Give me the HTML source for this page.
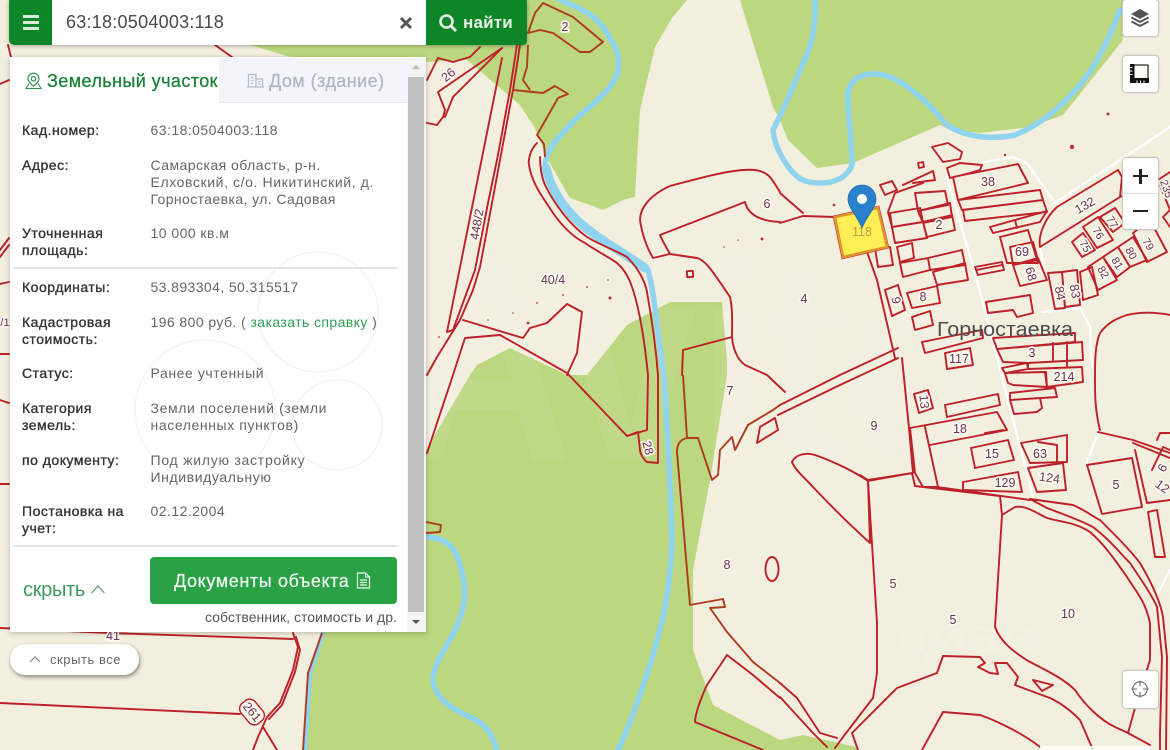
<!DOCTYPE html>
<html lang="ru"><head><meta charset="utf-8"><title>Карта</title>
<style>
html,body{margin:0;padding:0}
body{width:1170px;height:750px;position:relative;overflow:hidden;background:#f3efdf;font-family:"Liberation Sans","DejaVu Sans",sans-serif}
#map{position:absolute;left:0;top:0;filter:blur(.3px)}
.r{fill:none;stroke:#bd2028;stroke-width:1.9;stroke-linejoin:round;stroke-linecap:round}
.b{fill:none;stroke:#ae3a20;stroke-width:1.9;stroke-linejoin:round}
.w{fill:none;stroke:#fff;stroke-width:2.4;stroke-linejoin:round;stroke-linecap:round}
.riv{fill:none;stroke:#8fd3ef;stroke-linejoin:round;stroke-linecap:round}
.l{font:12.5px "Liberation Sans",sans-serif;fill:#6d3556;text-anchor:middle;paint-order:stroke;stroke:#fbf8ee;stroke-width:3.5px;stroke-linejoin:round}
.t{position:absolute;white-space:nowrap;line-height:17px;font-size:14px}
.k{color:#333;letter-spacing:.5px;-webkit-text-stroke:.35px #333}
.v{color:#666;letter-spacing:.46px}
.ctl{position:absolute;left:1122px;width:35px;background:#fff;border:1px solid #c9c9c3;border-radius:4px;box-shadow:0 0 2px rgba(0,0,0,.15)}
</style></head><body>
<svg id="map" width="1170" height="750" viewBox="0 0 1170 750" xmlns="http://www.w3.org/2000/svg">
<rect width="1170" height="750" fill="#f3efdf"/>
<!-- green -->
<path fill="#bbd77f" d="M250 45L527 0H687L672 18L655 47L640 110L637 160L635 197L623 200L603 210L590 205L570 198L548 160L535 128L520 105L467 60L430 62L300 60Z"/>
<path fill="#bbd77f" d="M740 0L750 33L773 107L780 120L788 140L817 168L853 163L940 125L950 130L980 133L1030 127L1063 115L1123 40V0Z"/>
<path fill="#bbd77f" d="M426 450L470 375L477 365L510 348L567 375L587 375L627 325L670 302L722 302L727 360L727 375L710 480L693 570L693 650L713 705L780 740L803 735L857 747V750H303L308 673L323 632H426Z"/>
<!-- water -->
<path class="riv" stroke-width="5.5" d="M560 0C580 8 593 14 603 27C615 45 622 55 617 75C608 95 590 105 573 122C558 138 547 148 545 165"/>
<path class="riv" stroke-width="9" d="M546 168C550 185 558 200 572 215C590 235 620 250 645 268"/>
<path class="riv" stroke-width="5.5" d="M648 270C655 295 658 340 664 375C667 420 670 470 672 540C670 600 660 630 650 665C640 695 630 725 618 750"/>
<path class="riv" stroke-width="5.5" d="M426 537C445 538 455 545 460 565C468 590 465 610 455 630C445 650 433 665 433 680C435 698 450 708 470 717C488 725 492 735 497 750"/>
<path class="riv" stroke-width="5.5" d="M815 0C816 30 812 45 800 70C790 95 778 120 773 130C775 150 790 175 805 181C825 186 845 182 852 165C852 140 847 110 848 92C852 75 870 70 890 77C910 85 930 105 947 125C965 137 990 140 1015 135C1040 125 1060 108 1080 85C1100 60 1110 35 1120 10"/>
<path class="riv" stroke-width="4.5" d="M323 633L310 673L305 750"/>
<!-- watermark -->
<text x="400" y="461" font-family="Liberation Sans,sans-serif" font-weight="700" font-size="290" textLength="590" lengthAdjust="spacingAndGlyphs" fill="#fff" opacity=".07">Avito</text>
<text x="895" y="652" font-family="Liberation Sans,sans-serif" font-size="46" textLength="140" lengthAdjust="spacingAndGlyphs" fill="#fff" opacity=".14">циан</text>
<!-- roads -->
<path class="w" d="M947 177L977 280L1033 497M983 162L1013 157L1027 163L1055 203L1170 127M1040 247L1047 280M1042 312L1080 308L1090 327L1092 367M1098 433L1087 462M1170 570L1158 593"/>
<!-- dots -->
<g fill="#b8343a"><circle cx="1072" cy="147" r="2.2"/><circle cx="1108" cy="114" r="1.5"/><circle cx="1158" cy="68" r="1.2"/><circle cx="1005" cy="155" r="1.2"/><circle cx="834" cy="205" r="1.4"/><circle cx="762" cy="239" r="1.5"/><circle cx="610" cy="298" r="1.5"/><circle cx="528" cy="323" r="1.4"/><circle cx="587" cy="287" r=".9"/><circle cx="608" cy="280" r=".9"/><circle cx="537" cy="303" r=".9"/><circle cx="563" cy="295" r=".9"/><circle cx="513" cy="313" r=".8"/><circle cx="488" cy="320" r=".8"/><circle cx="439" cy="337" r=".9"/><circle cx="738" cy="240" r=".8"/><circle cx="724" cy="247" r=".8"/></g>
<!-- lines left of panel -->
<path class="r" d="M0 84L9 80M0 250L9 238M0 257L9 245M0 284L9 282M0 354L9 354M0 400L9 403M0 484L9 484M8 45L11 57M215 45L232 57"/>
<!-- parcels left -->
<path class="b" d="M543 3L573 17L603 42L590 52L580 52L553 33L540 30L528 33L535 13Z"/>
<path class="r" d="M520 45L513 90L500 160L492 203L480 267L473 290L460 320L437 357L427 375M517 45L510 90L497 160L488 203L475 270L453 330M502 58L447 332L453 330"/>
<path class="r" d="M480 47L470 57L453 62L438 58L427 80M502 48L438 92L445 110L443 117L437 125L427 123M502 48L453 97L445 117"/>
<path class="b" d="M528 45L527 67L523 80L530 90M513 90L543 93L555 86L568 94L558 98L537 135L544 144L545 157"/>
<path class="r" d="M537 143C530 150 528 160 529 165C532 185 545 200 553 213C565 230 575 238 585 243C595 250 610 258 617 263C625 270 630 280 632 287C640 310 645 345 648 375L647 430L627 436M540 157C540 170 542 178 545 185C555 205 570 225 587 237C600 245 615 250 627 257C637 267 645 280 647 292C652 320 656 350 658 375L658 463L647 462C642 458 640 452 640 450L638 432L627 436M567 373L627 436M567 373L500 335L465 338L453 375L427 453M463 320L523 338L530 328L547 323L567 304L582 312L577 353L567 375"/>
<path class="r" d="M780 192C772 180 770 172 755 170C735 168 700 178 670 186C650 195 640 208 640 220C642 235 648 250 653 258L670 254C665 245 662 240 660 235L745 202C748 215 760 221 780 222M670 254L697 258C705 260 712 270 730 297C733 310 732 325 732 337C733 350 738 360 745 365L767 375L785 392M732 337L683 350L682 375"/>
<rect class="r" x="687" y="271" width="6" height="6" transform="rotate(-3 690 274)"/>
<path class="b" d="M683 375L687 438L698 438L712 480L718 475L720 450L732 437L735 450L748 425L773 410L780 405M687 438Q677 440 677 452L690 605L723 599L725 607L710 608L727 632L753 662L780 683"/>
<path class="r" d="M780 405L840 375L898 348M778 415L840 385L898 358M757 443L760 427L775 418L778 430Z"/>
<path class="r" d="M727 655L707 685C700 700 695 715 695 722L763 750M727 655L753 675L780 698"/>
<ellipse class="r" cx="772" cy="569" rx="6.5" ry="12"/>
<path class="b" d="M426 522L441 525L440 532L426 533"/>
<!-- bottom -->
<path class="r" d="M0 628L110 633L293 639M293 633L298 647L293 670L280 703L267 717L258 737L253 750M296 637L300 650L295 672L282 705L269 719M0 703L240 714M263 727L277 750"/>
<path class="b" d="M322 633L308 673L303 750"/>
<path class="r" d="M792 462C795 455 805 452 815 455C835 462 855 472 868 481L870 543C850 525 830 505 813 487C805 478 795 470 792 462Z"/>
<path class="r" d="M868 481L912 473L915 486L1000 496L1002 515L995 627C1000 640 1010 650 1030 662C1050 672 1065 680 1075 690C1085 705 1100 720 1115 727L1128 733L1135 708L1150 660L1150 623C1145 600 1135 590 1127 577C1115 560 1105 545 1090 532C1075 522 1060 522 1047 518C1035 512 1025 505 1015 507L1002 515"/>
<path class="r" d="M868 481L877 623L877 673L873 698L843 737L835 748M780 683L797 698L820 733L837 738M780 697L813 733L827 747"/>
<path class="r" d="M852 733L897 688L937 673L943 656L980 657L985 663L978 667L990 673L998 674L995 663L1007 663L1018 677L1015 685L1050 698C1065 705 1075 715 1080 720L1090 743L1093 750M852 733L858 750M1033 680L1053 685L1042 691ZM922 750L943 712L980 715C1000 722 1025 735 1040 747M1128 733L1150 745"/>
<path class="r" d="M1030 499L1073 505C1085 510 1095 518 1100 520C1115 535 1130 550 1140 563C1150 580 1160 600 1163 617L1167 657L1166 750M1030 499L1047 508C1065 515 1080 520 1093 527C1110 540 1120 553 1130 563C1140 578 1152 595 1157 607L1162 657L1160 733L1160 750"/>
<path class="r" d="M963 482L1018 472L1022 492L963 490ZM1028 468L1063 463L1066 490L1037 492ZM1087 465L1132 458L1142 507L1102 514ZM1135 450L1147 503L1170 500M1152 470L1163 447L1170 450M1148 512L1157 510L1165 557L1155 557Z"/>
<path class="r" d="M1098 432L1133 440L1170 453M1100 430C1095 410 1095 395 1095 380C1095 360 1095 345 1100 333C1108 322 1118 318 1127 315C1140 312 1155 312 1170 315M1133 443L1170 458M1157 440L1160 433L1170 433"/>
<!-- village -->
<path class="r" d="M867 252L877 280L895 358M902 358L909 428L913 473M860 475L868 480L913 473"/>
<path class="r" d="M885 290L898 285L905 310L892 316ZM907 293L937 286L940 303L912 308ZM912 317L930 311L933 325L915 330ZM922 342L982 330L983 338L925 353ZM945 353L970 348L973 365L947 369ZM914 394L928 390L933 408L919 413ZM945 405L998 394L1000 405L947 417Z"/>
<path class="r" d="M910 428L997 412L1007 430L930 445M925 427L938 487M910 428L915 473L923 487L938 487M971 448L1008 440L1014 460L975 468ZM985 433L1003 430M937 487L1030 500"/>
<path class="r" d="M1021 443L1067 435L1067 462L1030 463ZM1038 442L1057 445L1057 463"/>
<path class="r" d="M993 338L1075 333L1075 342L997 349ZM997 349L1082 342L1083 360L1028 363L1003 362ZM1053 343L1053 360M1067 342L1067 367M1028 363L1028 369L1082 367L1083 382L1047 387L1046 372M1002 368L1027 363L1028 369L1005 373ZM1005 373L1045 372L1047 387L1013 385L1008 383ZM1010 393L1055 388L1057 397L1010 400ZM1010 400L1040 398L1042 408L1037 412L1014 414Z"/>
<path class="r" d="M986 302L1030 295L1033 313L1017 317L1013 310L988 313ZM1048 273L1062 272L1065 308L1055 309ZM1062 272L1077 270L1080 305L1065 307ZM1080 272L1092 267L1098 295L1083 300Z"/>
<path class="r" d="M835 217L803 216L780 223M780 193L803 213M875 248L890 247L893 265L878 267ZM880 185L892 181L897 190L885 195ZM918 163L923 162L924 167L919 168ZM932 147L948 143L962 152L960 159L943 162ZM947 168L960 163L982 165L980 170L970 173L950 178ZM953 177L1018 164L1028 183L958 200ZM958 200L1040 190L1043 200L962 210ZM963 210L1043 200L1047 212L965 221Z"/>
<path class="r" d="M903 185L933 171L935 180L913 183M888 212L895 193L923 183M915 193L945 191L948 205L918 211ZM918 211L950 203L952 217L923 223ZM890 213L920 208L923 222L892 227ZM892 227L923 222L927 238L895 243ZM923 222L952 215L955 230L927 237ZM897 247L912 243L914 258L900 262ZM900 263L928 258L930 270L903 277ZM928 258L962 250L965 265L930 270ZM933 272L965 263L968 280L937 285ZM888 212L892 227L895 243"/>
<path class="r" d="M975 267L1002 262L1004 270L978 275ZM976 270L1002 265M990 227L1047 211L1040 222L993 233ZM1015 220L1017 228M1000 237L1028 230L1038 263L1007 263ZM1010 247L1033 242L1038 260L1013 265ZM1013 265L1038 258L1047 280L1020 286Z"/>
<path class="r" d="M1040 247C1038 235 1045 218 1057 207L1118 170L1122 177L1120 197L1040 247M1072 242L1083 233L1095 250L1082 257ZM1083 227L1098 217L1113 240L1097 248ZM1100 217L1115 208L1125 223L1113 232ZM1088 267L1103 257L1117 280L1098 290ZM1103 257L1118 247L1130 267L1117 277ZM1118 247L1133 237L1147 260L1130 267ZM1133 233L1150 220L1167 252L1147 262ZM1120 197L1158 180L1170 172M1158 180L1170 210M1163 217L1170 210M1163 217L1170 227"/>
<!-- highlighted parcel -->
<path d="M835 217L878 208L887 247L843 257Z" fill="#ffee55" stroke="#e0952a" stroke-width="2.5"/>
<path d="M833 216L879 206L889 248L842 259Z" fill="none" stroke="#d04a3a" stroke-width=".8"/>
<text class="l" style="stroke:none;fill:#b9a24a" x="862" y="236">118</text>
<!-- labels -->
<g>
<text class="l" x="565" y="31">2</text>
<text class="l" transform="translate(451 78) rotate(-40)">26</text>
<text class="l" transform="translate(481 225) rotate(-80)">448/2</text>
<text class="l" x="553" y="284">40/4</text>
<text class="l" x="767" y="208">6</text>
<text class="l" x="804" y="303">4</text>
<text class="l" x="730" y="395">7</text>
<text class="l" transform="translate(644 449) rotate(75)">28</text>
<text class="l" x="874" y="430">9</text>
<text class="l" x="727" y="569">8</text>
<text class="l" x="893" y="588">5</text>
<text class="l" x="953" y="624">5</text>
<text class="l" x="1068" y="618">10</text>
<text class="l" x="988" y="186">38</text>
<text class="l" x="939" y="229">2</text>
<text class="l" transform="translate(1087 209) rotate(-30)">132</text>
<text class="l" transform="translate(1082 248) rotate(60)" style="font-size:11px">75</text>
<text class="l" transform="translate(1095 235) rotate(60)" style="font-size:11px">76</text>
<text class="l" transform="translate(1109 224) rotate(60)" style="font-size:11px">77</text>
<text class="l" transform="translate(1100 274) rotate(60)" style="font-size:11px">82</text>
<text class="l" transform="translate(1114 265) rotate(60)" style="font-size:11px">81</text>
<text class="l" transform="translate(1128 255) rotate(60)" style="font-size:11px">80</text>
<text class="l" transform="translate(1145 246) rotate(60)" style="font-size:11px">79</text>
<text class="l" transform="translate(1163 190) rotate(70)" style="font-size:11px">235</text>
<text class="l" x="1022" y="256">69</text>
<text class="l" transform="translate(1027 275) rotate(75)">68</text>
<text class="l" transform="translate(1071 292) rotate(80)">83</text>
<text class="l" transform="translate(1056 294) rotate(80)">84</text>
<text class="l" transform="translate(892 301) rotate(80)">9</text>
<text class="l" x="923" y="301">8</text>
<text class="l" x="959" y="363">117</text>
<text class="l" transform="translate(920 402) rotate(85)">13</text>
<text class="l" x="960" y="433">18</text>
<text class="l" x="992" y="458">15</text>
<text class="l" x="1032" y="357">3</text>
<text class="l" x="1064" y="381">214</text>
<text class="l" x="1040" y="458">63</text>
<text class="l" transform="translate(1049 482) rotate(8)">124</text>
<text class="l" x="1005" y="487">129</text>
<text class="l" x="1116" y="489">5</text>
<text class="l" transform="translate(1160 490) rotate(35)">12</text>
<text class="l" transform="translate(1166 470) rotate(-60)">6</text>
<text class="l" x="113" y="640">41</text>
<text class="l" x="5" y="326" style="font-size:11px">/1</text>
<g transform="translate(252 712) rotate(50)"><rect x="-13" y="-9" width="26" height="18" rx="7" fill="#fbf8ee" stroke="#bd2028" stroke-width="1.4"/><text class="l" y="4" style="stroke:none">261</text></g>
</g>
<text x="1005" y="336" font-family="Liberation Sans,sans-serif" font-size="20" fill="#4d4d4d" text-anchor="middle" textLength="136" lengthAdjust="spacingAndGlyphs">Горностаевка</text>
<!-- marker -->
<path d="M862 228C856 214 848 208 848 199A14 14 0 1 1 876 199C876 208 868 214 862 228Z" fill="#2a81cb" stroke="#2270b0" stroke-width=".8"/>
<circle cx="862" cy="199" r="5" fill="#fff"/>
<rect x="1040" y="746" width="110" height="4" fill="#fff" opacity=".85"/>
</svg>

<!-- search bar -->
<div style="position:absolute;left:9px;top:0;width:518px;height:45px;background:#fff;border-radius:0 0 4px 4px;box-shadow:0 1px 4px rgba(0,0,0,.3)"></div>
<div style="position:absolute;left:9px;top:0;width:43px;height:45px;background:#0e8526;border-radius:0 0 0 5px"></div>
<div style="position:absolute;left:23px;top:15px;width:16px;height:3px;background:#d7ecd9;box-shadow:0 6px 0 #d7ecd9,0 12px 0 #d7ecd9"></div>
<div class="t" style="left:66px;top:12px;font-size:18px;line-height:21px;color:#4a4a4a;letter-spacing:.25px">63:18:0504003:118</div>
<svg style="position:absolute;left:399px;top:16px" width="14" height="14" viewBox="0 0 14 14"><path d="M2 2L12 12M12 2L2 12" stroke="#555" stroke-width="3"/></svg>
<div style="position:absolute;left:426px;top:0;width:101px;height:45px;background:#0e8526;border-radius:0 0 4px 0"></div>
<svg style="position:absolute;left:438px;top:13px" width="20" height="20" viewBox="0 0 20 20"><circle cx="8.5" cy="8.5" r="6" fill="none" stroke="#e3f2e5" stroke-width="2.6"/><path d="M13 13L18 18" stroke="#e3f2e5" stroke-width="3"/></svg>
<div class="t" style="left:463px;top:12px;font-size:17px;line-height:21px;color:#e8f4ea;font-weight:700;letter-spacing:.2px">найти</div>

<!-- panel -->
<div style="position:absolute;left:10px;top:57px;width:416px;height:575px;background:#fff;box-shadow:0 1px 5px rgba(0,0,0,.25)"></div>
<!-- faint circles -->
<svg style="position:absolute;left:120px;top:240px" width="280" height="250" viewBox="0 0 280 250" fill="none" stroke="#f4f4f4" stroke-width="1.5"><circle cx="198" cy="72" r="60"/><circle cx="85" cy="170" r="70"/><circle cx="217" cy="185" r="45"/></svg>
<div style="position:absolute;left:219px;top:58px;width:188px;height:45px;background:#f3f5fa;border-bottom:1px solid #e4e8ef;box-sizing:border-box"></div>
<svg style="position:absolute;left:25px;top:72px" width="17" height="18" viewBox="0 0 17 18"><path d="M8.5 1.2A5.6 5.6 0 0 0 3 6.8C3 9.8 6.5 12.5 8.5 14.2C10.5 12.5 14 9.8 14 6.8A5.6 5.6 0 0 0 8.5 1.2Z" fill="none" stroke="#2f8f4a" stroke-width="1.2"/><circle cx="8.5" cy="6.8" r="2.2" fill="none" stroke="#2f8f4a" stroke-width="1.2"/><path d="M4 11.5L1 16.5H16L13 11.5" fill="none" stroke="#2f8f4a" stroke-width="1.1"/></svg>
<div class="t" style="left:47px;top:71px;font-size:18px;line-height:21px;color:#177f35;letter-spacing:.42px;-webkit-text-stroke:.25px #177f35">Земельный участок</div>
<svg style="position:absolute;left:247px;top:73px" width="17" height="15" viewBox="0 0 17 15"><path d="M1.5 14V1.5H9V14M9 6H15.5V14M0 14H17M4 4.5H6.5M4 7.5H6.5M4 10.5H6.5M11 8.5H13.5M11 11H13.5" fill="none" stroke="#b4bcc7" stroke-width="1.3"/></svg>
<div class="t" style="left:269px;top:71px;font-size:18px;line-height:21px;color:#aeb6c1;letter-spacing:.45px;-webkit-text-stroke:.25px #aeb6c1">Дом (здание)</div>

<div class="t k" style="left:22px;top:122px">Кад.номер:</div>
<div class="t v" style="left:150.500px;top:122px">63:18:0504003:118</div>
<div class="t k" style="left:22px;top:157px">Адрес:</div>
<div class="t v" style="left:150.500px;top:157px">Самарская область, р-н.</div>
<div class="t v" style="left:150.500px;top:174px;letter-spacing:.6px">Елховский, с/о. Никитинский, д.</div>
<div class="t v" style="left:150.500px;top:191px;letter-spacing:.4px">Горностаевка, ул. Садовая</div>
<div class="t k" style="left:22px;top:225px">Уточненная</div>
<div class="t k" style="left:22px;top:242px">площадь:</div>
<div class="t v" style="left:150.500px;top:225px">10 000 кв.м</div>
<div style="position:absolute;left:13px;top:267px;width:384px;height:2px;background:#e2e5e7"></div>
<div class="t k" style="left:22px;top:279px">Координаты:</div>
<div class="t v" style="left:150.500px;top:279px;letter-spacing:.4px">53.893304, 50.315517</div>
<div class="t k" style="left:22px;top:314px">Кадастровая</div>
<div class="t k" style="left:22px;top:331px">стоимость:</div>
<div class="t v" style="left:150.500px;top:314px;letter-spacing:.42px">196 800 руб. ( <span style="color:#2f9e55">заказать справку</span> )</div>
<div class="t k" style="left:22px;top:365px">Статус:</div>
<div class="t v" style="left:150.500px;top:365px;letter-spacing:.58px">Ранее учтенный</div>
<div class="t k" style="left:22px;top:400px">Категория</div>
<div class="t k" style="left:22px;top:417px">земель:</div>
<div class="t v" style="left:150.500px;top:400px;letter-spacing:.62px">Земли поселений (земли</div>
<div class="t v" style="left:150.500px;top:417px;letter-spacing:.6px">населенных пунктов)</div>
<div class="t k" style="left:22px;top:452px">по документу:</div>
<div class="t v" style="left:150.500px;top:452px;letter-spacing:.75px">Под жилую застройку</div>
<div class="t v" style="left:150.500px;top:469px;letter-spacing:.6px">Индивидуальную</div>
<div class="t k" style="left:22px;top:503px">Постановка на</div>
<div class="t k" style="left:22px;top:520px">учет:</div>
<div class="t v" style="left:150.500px;top:503px">02.12.2004</div>
<div style="position:absolute;left:13px;top:545px;width:384px;height:2px;background:#e2e5e7"></div>
<div style="position:absolute;left:150px;top:557px;width:247px;height:47px;background:#28a245;border-radius:4px"></div>
<div class="t" style="left:174px;top:571px;font-size:18px;line-height:21px;color:#eef8f0;letter-spacing:.62px;-webkit-text-stroke:.25px #eef8f0">Документы объекта</div>
<svg style="position:absolute;left:356px;top:572px" width="15" height="17" viewBox="0 0 15 17"><path d="M1.5 1H9.5L13.5 5V16H1.5ZM9.5 1V5H13.5M4 8H11M4 10.5H11M4 13H11" fill="none" stroke="#e8f5ea" stroke-width="1.2"/></svg>
<div class="t" style="right:773px;top:609px;color:#555;letter-spacing:.04px">собственник, стоимость и др.</div>
<div class="t" style="left:23px;top:578px;font-size:20px;line-height:24px;color:#3f9a5d;letter-spacing:-.3px">скрыть</div>
<svg style="position:absolute;left:90px;top:583px" width="16" height="12" viewBox="0 0 16 12"><path d="M1.5 10L8 3L14.5 10" fill="none" stroke="#6aa982" stroke-width="1.3"/></svg>
<!-- scrollbar -->
<div style="position:absolute;left:407px;top:58px;width:19px;height:574px;background:#f4f4f4"></div>
<div style="position:absolute;left:408px;top:77px;width:16px;height:535px;background:#c1c1c1"></div>
<svg style="position:absolute;left:408px;top:62px" width="16" height="10"><path d="M4 7L8 3L12 7Z" fill="#b5b5b5"/></svg>
<svg style="position:absolute;left:408px;top:617px" width="16" height="10"><path d="M4 3L8 7L12 3Z" fill="#555"/></svg>
<!-- hide all -->
<div style="position:absolute;left:10px;top:644px;width:129px;height:31px;background:#fff;border-radius:16px;box-shadow:1px 2px 4px rgba(0,0,0,.45)"></div>
<svg style="position:absolute;left:28px;top:654px" width="14" height="10" viewBox="0 0 14 10"><path d="M2 8L7 3L12 8" fill="none" stroke="#888" stroke-width="1.2"/></svg>
<div class="t" style="left:50px;top:651px;font-size:13px;color:#666;letter-spacing:.55px">скрыть все</div>
<!-- right controls -->
<div class="ctl" style="top:-1px;height:36px"></div>
<svg style="position:absolute;left:1129px;top:8px" width="22" height="20" viewBox="0 0 22 20"><path d="M11 1L20 6L11 11L2 6Z" fill="#555"/><path d="M2.5 9.5L11 14L19.5 9.5M2.5 13.5L11 18L19.500 13.500" fill="none" stroke="#555" stroke-width="2"/></svg>
<div class="ctl" style="top:55px;height:36px"></div>
<svg style="position:absolute;left:1130px;top:64px" width="19" height="19" viewBox="0 0 19 19"><rect x="1" y="1" width="17" height="16.500" fill="#fbfbf6" stroke="#222" stroke-width="1.2"/><path d="M0 0H4.500V14H19V19H0Z" fill="#111"/><path d="M0 3.500H2.500M0 7H2.500M0 10.500H2.500M7 19V16.500M10.500 19V16.500M14 19V16.500" stroke="#fff" stroke-width="1"/></svg>
<div class="ctl" style="top:157px;height:71px"></div>
<div style="position:absolute;left:1123px;top:193px;width:35px;height:1px;background:#ddd"></div>
<div style="position:absolute;left:1133px;top:175px;width:15px;height:2.400px;background:#222"></div>
<div style="position:absolute;left:1139.400px;top:168.500px;width:2.400px;height:15px;background:#222"></div>
<div style="position:absolute;left:1133px;top:210px;width:15px;height:2px;background:#222"></div>
<div class="ctl" style="top:670px;height:37px"></div>
<svg style="position:absolute;left:1130px;top:680px" width="20" height="18" viewBox="0 0 20 18"><circle cx="10" cy="9" r="7.200" fill="none" stroke="#666" stroke-width="1.100"/><path d="M10 .5V6M10 12V17.500M1.500 9H7M13 9H18.500" stroke="#666" stroke-width="1.100"/></svg>
</body></html>
